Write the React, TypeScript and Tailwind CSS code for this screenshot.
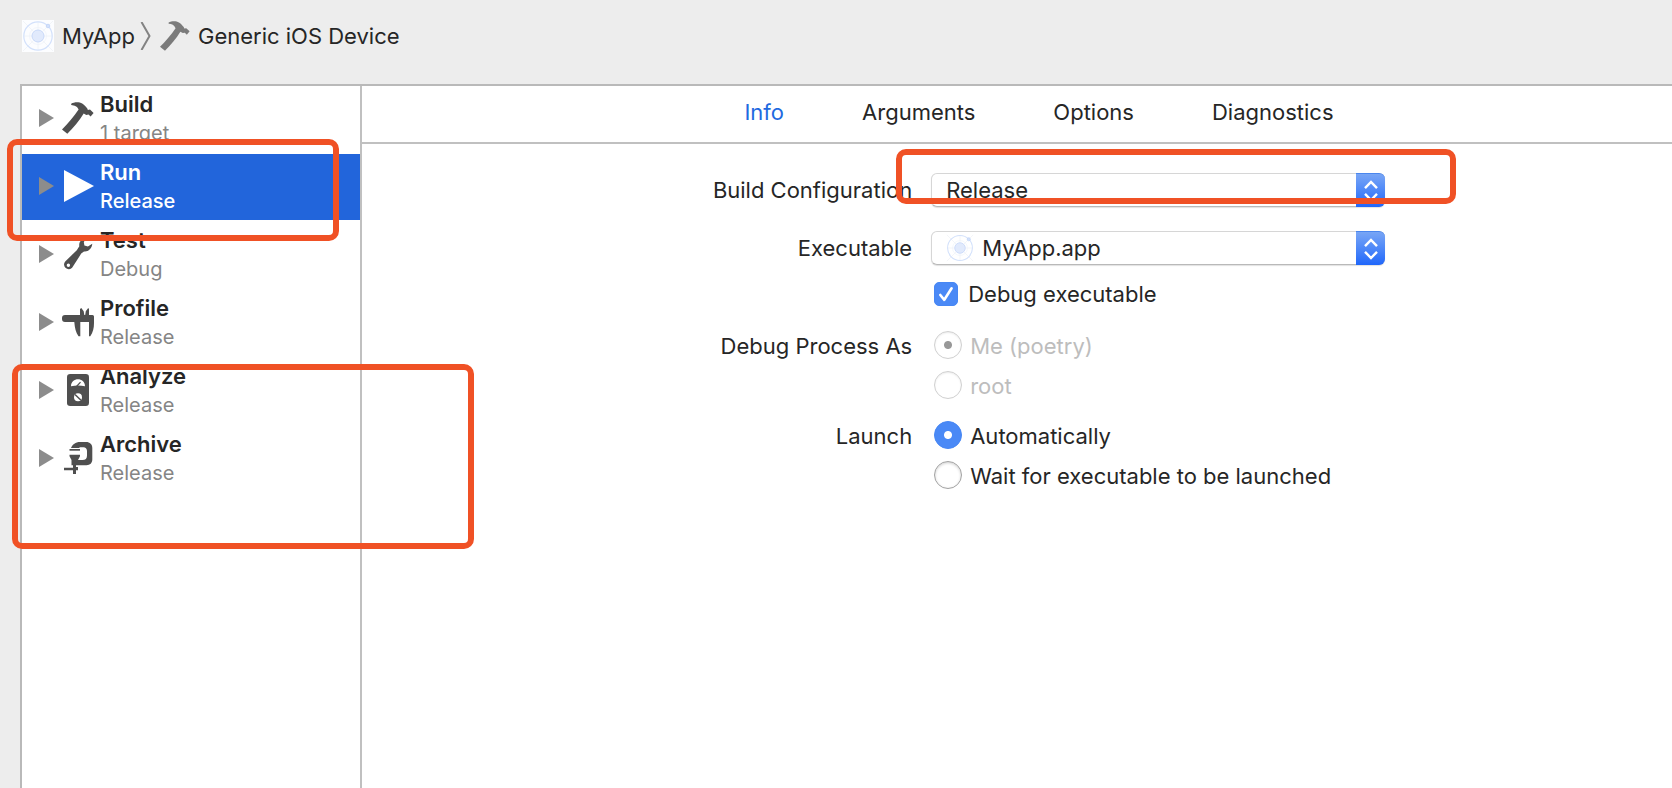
import type { ReactNode } from "react";

function AppIcon({ className, plain }: { className: string; plain?: boolean }) {
  return (
    <svg viewBox="0 0 32 32" className={className} aria-hidden="true">
      {!plain && <rect width="32" height="32" fill="#fcfdff" />}
      <g fill="none" stroke="#eef1f6" strokeWidth="0.8">
        <path d="M1 1 31 31M31 1 1 31M16 2v28M2 16h28" />
      </g>
      <circle cx="16" cy="16" r="14.2" fill="none" stroke="#d3e1fb" strokeWidth="1.2" />
      <circle cx="16" cy="16" r="8.5" fill="none" stroke="#eff3fa" strokeWidth="0.8" />
      <circle cx="16" cy="16" r="6" fill="#e1eafc" stroke="#c9d9f9" strokeWidth="1" />
      <circle cx="26" cy="6" r="1.8" fill="#d3e1fb" stroke="#bfd2f8" strokeWidth="0.8" />
    </svg>
  );
}

function Hammer() {
  return (
    <path d="M9.2 1.7C12 0 17-.4 20.200 1.500 22.600 3 24 4.800 25.300 6.500L25.900 8.100 28 7.600 31.600 10.900 28.600 14.600 26.500 12.500 24.300 12.900 21.700 11.500C17.500 18.500 11.500 25.500 5.300 31.800L0 27.400C5.500 22 12 14.500 16.600 7.600 15.400 4.200 12.500 3.200 9.200 2.900Z" />
  );
}

const icons: Record<string, ReactNode> = {
  build: <Hammer />,
  run: <path d="M2 0 32 16 2 32Z" />,
  test: (
    <path
      fillRule="evenodd"
      d="M24.500 0C20 .2 16.500 4 17.300 8.200L14.800 12.300 3.200 23.400A4.700 4.700 0 1 0 10.300 29.600L19.200 15.600 22 13.400C26 14 29.800 11 30.300 5.800L25.900 8.600 22.400 7.600 21.800 4ZM6.400 25.600a1.700 1.700 0 1 1 0 3.400a1.700 1.700 0 0 1 0-3.400Z"
    />
  ),
  profile: (
    <path d="M3 9H18V3L19.300 2 21.700 5.200 22.300 9H23.200L23.800 5.200 26.200 2 27 3V9H30.500Q32 9 32 10.500V17C32 22 31 26.500 28.300 30.200H27V16H18.300V30.200H16.500C13.800 26.500 12.800 22 12.300 16H3A3 3 0 0 1 0 13V12A3 3 0 0 1 3 9Z" />
  ),
  analyze: (
    <>
      <rect x="5" width="22" height="32" rx="3.200" />
      <path d="M9 12.300C9 3 23 3 23 12.300Q16 10.800 9 12.300Z" fill="#fff" />
      <path d="m14.500 12.500 4-4.300" stroke="#4f4f4f" strokeWidth="1.200" />
      <circle cx="16" cy="23.200" r="4" fill="#fff" />
      <path d="m13 20.500 6 5.800" stroke="#4f4f4f" strokeWidth="1.500" />
    </>
  ),
  archive: (
    <>
      <path d="M7.500 7H18V8.700H7.500Z" />
      <path d="M9 6C10.500 2.500 13.500 0 18 0H24C28 0 30.300 2.500 30.300 6V17.500C30.300 21 28 23.200 24.500 23.200H9.500V18L7.500 14.300V12.800H18V14.300L16 18H20.500C23.500 18 25 16.500 25 13.500V9C25 6.500 23.500 5.200 21.500 5.200H18L17 6Z" />
      <path d="M11 22H14V25H16V28.300H14V32H11V28.300H2V25.700H11Z" />
    </>
  ),
};

type Scheme = { id: string; title: string; detail: string };

const schemes: Scheme[] = [
  { id: "build", title: "Build", detail: "1 target" },
  { id: "run", title: "Run", detail: "Release" },
  { id: "test", title: "Test", detail: "Debug" },
  { id: "profile", title: "Profile", detail: "Release" },
  { id: "analyze", title: "Analyze", detail: "Release" },
  { id: "archive", title: "Archive", detail: "Release" },
];

/* Orange annotation frame, anchored to the element it sits over. */
function Marker({ className }: { className: string }) {
  return (
    <div
      aria-hidden="true"
      className={`pointer-events-none absolute z-10 rounded-[10px] border-6 border-[#f05125] ${className}`}
    />
  );
}

const markers: Record<string, string> = {
  run: "-left-[15px] -top-[15px] h-[102px] w-[332px]",
  analyze: "-left-[10px] top-[6px] h-[185px] w-[462px]",
};

function SchemeRow({ scheme, selected }: { scheme: Scheme; selected: boolean }) {
  return (
    <li className={markers[scheme.id] ? "relative" : ""}>
      <button
        type="button"
        aria-current={selected}
        className={`flex h-[66px] w-full items-center pl-[17px] text-left ${
          selected ? "bg-[#2265db] text-white" : "text-[#262626]"
        }`}
      >
        <svg viewBox="0 0 15 18" className="mb-0.5 h-[18px] w-[15px] fill-[#8c8c8c]" aria-hidden="true">
          <path d="M0 0 15 9 0 18Z" />
        </svg>
        <svg
          viewBox="0 0 32 32"
          className={`mb-0.5 ml-2 size-8 ${selected ? "fill-white" : "fill-[#4f4f4f]"}`}
          aria-hidden="true"
        >
          {icons[scheme.id]}
        </svg>
        <span className="ml-1.5 flex flex-col gap-px pb-px">
          <span className="text-[22px] leading-7 font-semibold">{scheme.title}</span>
          <span
            className={`text-[20px] leading-7 ${selected ? "font-medium text-white" : "text-[#858585]"}`}
          >
            {scheme.detail}
          </span>
        </span>
      </button>
      {markers[scheme.id] && <Marker className={markers[scheme.id]} />}
    </li>
  );
}

function PopUp({ id, value, icon, children }: { id: string; value: string; icon?: boolean; children?: ReactNode }) {
  return (
    <div className="relative w-[454px]">
      <select
        id={id}
        defaultValue={value}
        className={`block h-[34px] w-full appearance-none rounded-md border border-[#d6d6d6] border-b-[#b9b9b9] bg-white pr-9 shadow-[0_1px_1px_rgba(0,0,0,0.12)] ${
          icon ? "pl-[50px]" : "pl-[14px]"
        }`}
      >
        <option>{value}</option>
      </select>
      {icon && <AppIcon plain className="pointer-events-none absolute top-[3px] left-[15px] size-7" />}
      <span className="pointer-events-none absolute top-0 right-0 flex h-[34px] w-[29px] items-center justify-center rounded-r-md border-t border-[#4a86ee] bg-linear-to-b from-[#78a5f5] to-[#1f66fa]">
        <svg viewBox="0 0 14 22" className="h-[22px] w-[14px]" fill="none" stroke="#fff" strokeWidth="2.400" aria-hidden="true">
          <path d="m1 8.200 6-6.200 6 6.200M1 13.800l6 6.200 6-6.200" />
        </svg>
      </span>
      {children}
    </div>
  );
}

function Radio({ name, label, checked, disabled }: { name: string; label: string; checked?: boolean; disabled?: boolean }) {
  const box = disabled
    ? "border border-[#d0d0d0] shadow-[inset_0_1px_2px_rgba(0,0,0,0.08)] checked:bg-[radial-gradient(circle,#989898_3.500px,transparent_4.500px)]"
    : "border border-[#a2a2a2] shadow-[inset_0_1px_3px_rgba(0,0,0,0.2)] checked:border-[#4787f4] checked:bg-[#4a89f6] checked:bg-[radial-gradient(circle,#fff_3.500px,transparent_4.500px)] checked:shadow-none";
  return (
    <label className={`flex h-7 items-center gap-2 ${disabled ? "text-[#bdbdbd]" : ""}`}>
      <input
        type="radio"
        name={name}
        defaultChecked={checked}
        disabled={disabled}
        className={`size-7 appearance-none rounded-full ${box}`}
      />
      <span className="pt-0.5">{label}</span>
    </label>
  );
}

const tabs = ["Info", "Arguments", "Options", "Diagnostics"];

export default function App() {
  return (
    <div className="flex min-h-screen flex-col overflow-hidden bg-[#ededed] font-['Inter','Liberation_Sans',sans-serif] text-[22px] leading-7 text-[#262626]">
      <header className="flex h-[84px] items-start pt-5 pl-[22px]">
        <button type="button" className="flex h-8 items-center gap-2">
          <AppIcon className="size-8" />
          MyApp
        </button>
        <svg viewBox="0 0 12 28" className="mt-[2px] ml-[5px] h-7 w-3" fill="none" stroke="#838383" strokeWidth="2" aria-hidden="true">
          <path d="M1.500 0 9.500 14 1.500 28" />
        </svg>
        <button type="button" className="ml-2 flex h-8 items-center gap-2">
          <svg viewBox="0 0 32 32" className="size-[30px] fill-[#7b7b7b]" aria-hidden="true">
            <Hammer />
          </svg>
          Generic iOS Device
        </button>
      </header>

      <div className="ml-5 flex grow border-t-2 border-l-2 border-[#b9b9b9] bg-white">
        <aside className="w-[340px] shrink-0 border-r-2 border-[#c0c0c0]">
          <ul className="flex flex-col gap-0.5">
            {schemes.map((scheme) => (
              <SchemeRow key={scheme.id} scheme={scheme} selected={scheme.id === "run"} />
            ))}
          </ul>
        </aside>

        <main className="min-w-0 grow">
          <nav className="flex h-[58px] items-center justify-center gap-[78px] border-b-2 border-[#c0c0c0] pb-1 pl-11" role="tablist">
            {tabs.map((tab) => (
              <button
                key={tab}
                type="button"
                role="tab"
                aria-selected={tab === "Info"}
                className={tab === "Info" ? "text-[#1f6ae0]" : ""}
              >
                {tab}
              </button>
            ))}
          </nav>

          <form className="grid grid-cols-[42%_auto] items-start gap-x-[19px] pt-[29px]">
            <label htmlFor="configuration" className="justify-self-end leading-[34px]">
              Build Configuration
            </label>
            <PopUp id="configuration" value="Release">
              <Marker className="-top-6 -left-[35px] h-[55px] w-[560px]" />
            </PopUp>

            <label htmlFor="executable" className="mt-6 justify-self-end leading-[34px]">
              Executable
            </label>
            <div className="mt-6">
              <PopUp id="executable" value="MyApp.app" icon />
              <label className="mt-[15px] ml-[3px] flex h-7 items-center gap-2.5">
                <span className="grid size-6">
                  <input
                    type="checkbox"
                    defaultChecked
                    className="col-start-1 row-start-1 size-6 appearance-none rounded-[5px] border border-[#a9a9a9] checked:border-[#4787f4] checked:bg-[#4a89f6]"
                  />
                  <svg viewBox="0 0 24 24" className="pointer-events-none col-start-1 row-start-1 size-6" fill="none" stroke="#fff" strokeWidth="2.600" strokeLinecap="round" strokeLinejoin="round" aria-hidden="true">
                    <path d="M6.300 13 10.300 17.800 17.600 6.300" />
                  </svg>
                </span>
                Debug executable
              </label>
            </div>

            <span id="process-label" className="mt-6 justify-self-end">
              Debug Process As
            </span>
            <div role="radiogroup" aria-labelledby="process-label" className="mt-[23px] ml-[3px] flex flex-col gap-3">
              <Radio name="process" label="Me (poetry)" checked disabled />
              <Radio name="process" label="root" disabled />
            </div>

            <span id="launch-label" className="mt-[23px] justify-self-end">
              Launch
            </span>
            <div role="radiogroup" aria-labelledby="launch-label" className="mt-[22px] ml-[3px] flex flex-col gap-3">
              <Radio name="launch" label="Automatically" checked />
              <Radio name="launch" label="Wait for executable to be launched" />
            </div>
          </form>
        </main>
      </div>
    </div>
  );
}
